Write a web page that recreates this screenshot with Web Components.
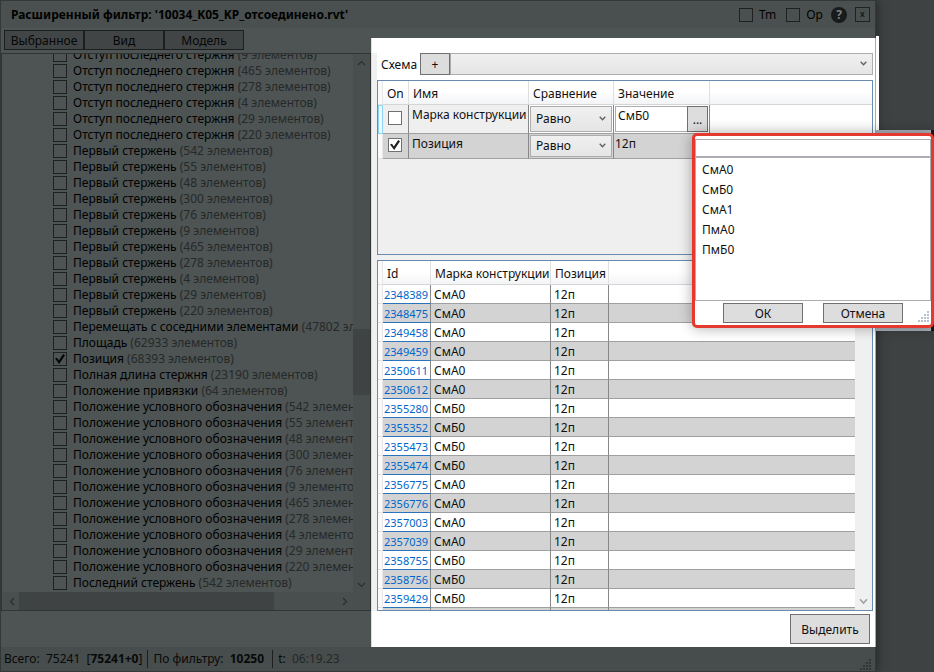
<!DOCTYPE html>
<html lang="ru">
<head>
<meta charset="utf-8">
<title>Расширенный фильтр</title>
<style>
html,body{margin:0;height:100%}
body{font:12px/16px "Noto Sans","Open Sans",sans-serif;color:#111;background:#3e4242;overflow:hidden}
</style>
</head>
<body>
<filter-app></filter-app>
<script>
const define=(name,css,html)=>{
  customElements.define(name,class extends HTMLElement{
    connectedCallback(){
      if(this.shadowRoot)return;
      const root=this.attachShadow({mode:'open'});
      root.innerHTML=`<style>*{box-sizing:border-box}button,input,select{font:inherit;color:inherit;margin:0}${css}</style>${typeof html==='function'?html(this):html}`;
    }
  });
};

define('ui-check',`
:host{display:block}
label{display:flex;align-items:center;gap:6px;white-space:pre}
input{appearance:none;flex:none;width:14px;height:14px;border:1px solid var(--box-line,#707070);background:var(--box,#fff);display:grid;place-items:center}
input:checked::before{content:"";width:10px;height:10px;background:var(--tick,#212121);clip-path:polygon(0 45%,20% 38%,38% 65%,82% 0,100% 12%,42% 100%)}
`,h=>`<label><input type="checkbox" ${h.hasAttribute('checked')?'checked':''} aria-label="${h.getAttribute('label')||h.textContent.trim()}"><span><slot></slot></span></label>`);

define('ui-button',`
:host{display:block}
button{display:block;width:100%;height:100%;padding:2px 0 0;border:1px solid var(--btn-line,#707070);background:var(--btn,#ddd);border-radius:0;line-height:16px}
`,'<button type="button"><slot></slot></button>');

define('ui-select',`
:host{display:block;position:relative}
select{display:block;appearance:none;width:100%;height:100%;padding:0 22px 0 5px;border:1px solid #acacac;border-radius:0;background:linear-gradient(#f0f0f0,#e5e5e5)}
svg{position:absolute;right:6px;top:calc(50% - 3px);pointer-events:none}
`,h=>`<select aria-label="${h.getAttribute('label')}"><option>${h.getAttribute('value')||''}</option></select><svg width="7" height="5" fill="none" stroke="#606060" stroke-width="1.3"><path d="M.7.7 3.5 3.7 6.3.7"/></svg>`);

define('tree-list',`
:host{display:grid;grid-template:minmax(0,1fr) 18px/minmax(0,1fr) 17px;border:1px solid #303434;background:#4d5453;--box:#4d5453;--box-line:#1f2121;--tick:#050606}
ul{list-style:none;margin:0;padding:0 0 0 51px;overflow:hidden;color:#000}
li{height:16px}
li:first-child{margin-top:-7px}
i{font-style:normal;color:#262929}
.v,.h{background:#484f4e;display:flex;align-items:center}
.v{flex-direction:column;padding:6px 0 4px}
.h{padding:0 5px 0 7px}
.v b{width:17px;height:66px;background:#3f4343;margin:263px 0 auto}
.h b{width:255px;height:18px;background:#3f4343;margin:0 auto 0 4px}
.c{background:#484f4e}
`,()=>{
  const A='Отступ последнего стержня',B='Первый стержень',C='Положение условного обозначения';
  const all=[542,55,48,300,76,9,465,278,4,29,220];
  const rows=[...[9,465,278,4,29,220].map(n=>[A,n]),...all.map(n=>[B,n]),['Перемещать с соседними элементами',47802],['Площадь',62933],['Позиция',68393,1],['Полная длина стержня',23190],['Положение привязки',64],...all.map(n=>[C,n]),['Последний стержень',542],['Последний стержень',55]];
  const arr=(w,h,d)=>`<svg width="${w}" height="${h}" fill="none" stroke="#2b2e2e" stroke-width="1.2"><path d="${d}"/></svg>`;
  return `<ul>${rows.map(r=>`<li><ui-check ${r[2]?'checked':''}>${r[0]} <i>(${r[1]} элементов)</i></ui-check></li>`).join('')}</ul>
  <div class="v">${arr(9,6,'M1 5 4.5 1.5 8 5')}<b></b>${arr(9,6,'M1 1 4.5 4.5 8 1')}</div>
  <div class="h">${arr(6,9,'M5 1 1.5 4.5 5 8')}<b></b>${arr(6,9,'M1 1 4.5 4.5 1 8')}</div><div class="c"></div>`;
});

const tableCss=`
table{border-collapse:separate;border-spacing:0;table-layout:fixed;width:100%}
th{font-weight:400;text-align:left;height:24px;padding:2px 0 0 4px;white-space:nowrap;background:linear-gradient(#fff 45%,#f3f4f6);border-right:1px solid #dfdfdf;border-bottom:1px solid #d5d5d5}
th:last-child{border-right:0}
td{border-right:1px solid #888;border-bottom:1px solid #a0a0a0;white-space:nowrap;overflow:hidden}
td:last-child{border-right:0}
th:first-child,td:first-child{border-right:1px solid #e8e8e8;border-bottom-color:#e4e4e4;background:#fafafa;padding:0}
`;

define('filter-rules',`
:host{display:block;border:1px solid #688caf;background:#efefef}
${tableCss}
td{background:#fff;padding:0;vertical-align:top}
tr.alt td:not(:first-child){background:#d3d3d3}
tr.cur td.name,tr.cur td.on{background:#efefef}
tr.cur td:first-child{background:#eef9ff;border:1px solid #8ed4f5}
.on{padding:6px 5px 5px}
.name{padding:2px 0 0 3px}
.r1 td{height:29px}.r2 td{height:25px}
.r2 .on{padding-top:4px}.r2 .val{padding:2px 1px 0}
ui-select{margin:1px}
.r1 ui-select{height:26px}.r2 ui-select{height:22px}
.edit{display:flex;margin:1px;height:26px}
.edit input{flex:1;min-width:0;border:1px solid #abadb3;border-right:0;padding:0 2px 6px;background:#fff}
.edit ui-button{width:21px}
`,`<table><colgroup><col style="width:5px"><col style="width:26px"><col style="width:120px"><col style="width:85px"><col style="width:96px"><col></colgroup>
<thead><tr><th></th><th>On</th><th>Имя</th><th>Сравнение</th><th>Значение</th><th></th></tr></thead>
<tbody><tr class="r1 cur"><td></td><td class="on"><ui-check label="Марка конструкции"></ui-check></td><td class="name">Марка конструкции</td><td><ui-select label="Сравнение" value="Равно"></ui-select></td><td><div class="edit"><input type="text" aria-label="Значение" value="СмБ0"><ui-button>...</ui-button></div></td><td></td></tr>
<tr class="r2 alt"><td></td><td class="on"><ui-check label="Позиция" checked></ui-check></td><td class="name">Позиция</td><td><ui-select label="Сравнение" value="Равно"></ui-select></td><td class="val">12п</td><td></td></tr></tbody></table>`);

define('result-grid',`
:host{display:grid;grid-template-columns:minmax(0,1fr) 17px;border:1px solid #688caf;background:#fff;overflow:hidden;min-height:0}
.clip{overflow:hidden;min-height:0}
${tableCss}
td{height:19px;line-height:17px;background:#fff;padding:1px 3px 0}
tr:nth-child(even) td:not(:first-child){background:#d3d3d3}
td.id{padding:1px 0 0 1px;border-bottom-color:#2a73bd;font-size:11px}
a{color:#0066cc;text-decoration:none}
.bar{background:#f0f0f0;display:flex;align-items:flex-end;justify-content:center;padding-bottom:5px}
`,()=>{
  const d='2348389 А,2348475 А,2349458 А,2349459 А,2350611 А,2350612 А,2355280 Б,2355352 Б,2355473 Б,2355474 Б,2356775 А,2356776 А,2357003 А,2357039 А,2358755 Б,2358756 Б,2359429 Б,2359430 Б'.split(',').map(s=>s.split(' '));
  return `<div class="clip"><table><colgroup><col style="width:5px"><col style="width:48px"><col style="width:120px"><col style="width:58px"><col></colgroup><thead><tr><th></th><th>Id</th><th>Марка конструкции</th><th>Позиция</th><th></th></tr></thead><tbody>${d.map(([i,m])=>`<tr><td></td><td class="id"><a href="#${i}">${i}</a></td><td>См${m}0</td><td>12п</td><td></td></tr>`).join('')}</tbody></table></div><div class="bar"><svg width="9" height="7" fill="none" stroke="#a0a0a0" stroke-width="1.6"><path d="M1 1.2 4.5 5 8 1.2"/></svg></div>`;
});

define('value-popup',`
:host{display:flex;flex-direction:column;background:#fff;border:3px solid #e5392f;border-radius:5px;box-shadow:0 0 14px #0005}
input{display:block;width:100%;height:19px;margin-top:3px;border:1px solid #abadb3;border-bottom-width:2px;padding:0 4px;background:#fff}
ul{list-style:none;margin:0;padding:2px 6px;flex:1;border:1px solid #abadb3;border-top:0}
li{height:20px;line-height:20px}
.foot{display:flex;gap:20px;padding:2px 28px 0;height:24px;position:relative}
ui-button{flex:1;height:20px}
svg{position:absolute;right:1px;bottom:2px}
`,()=>{
  let dots='';for(let r=0;r<4;r++)for(let c=3-r;c<4;c++)dots+=`<rect x="${c*3}" y="${r*3}" width="2" height="2"/>`;
  return `<input type="text" aria-label="Поиск значения"><ul>${['СмА0','СмБ0','СмА1','ПмА0','ПмБ0'].map(t=>`<li>${t}</li>`).join('')}</ul><div class="foot"><ui-button>ОК</ui-button><ui-button>Отмена</ui-button><svg width="12" height="12" fill="#b7bfd0">${dots}</svg></div>`;
});

define('title-bar',`
:host{display:flex;align-items:center;height:28px;padding:0 5px 0 10px;background:#4a504f;border-top:1px solid #343838;color:#000;--box:#4a504f;--box-line:#1f2121}
h1{font-size:12px;line-height:16px;font-weight:700;margin:0;flex:1;white-space:nowrap}
.tools{display:flex;align-items:center;gap:8px}
.tools ui-check+ui-check{margin-left:2px}
.help{display:block;width:16px;height:16px;padding:0;border:0;border-radius:8px;background:#191b1b;color:#7d8282;font-weight:700;line-height:16px}
.close{display:block;width:15px;height:15px;padding:0 0 2px;border:1px solid #202222;background:#4a504f;font-size:9px;line-height:11px}
`,`<h1>Расширенный фильтр: '10034_K05_KP_отсоединено.rvt'</h1><div class="tools"><ui-check>Tm</ui-check><ui-check>Op</ui-check><button class="help" type="button" aria-label="Справка">?</button><button class="close" type="button" aria-label="Закрыть">x</button></div>`);

define('status-bar',`
:host{display:flex;align-items:center;height:25px;padding:0 3px;background:#474d4c;border-bottom:1px solid #343838;color:#080909;white-space:pre}
span+span{border-left:1px solid #1d1f1f;padding-left:5px;margin-left:5px;line-height:18px}
i{font-style:normal;color:#242727}
svg{margin-left:auto;align-self:flex-end}
`,()=>{
  let dots='';for(let r=0;r<4;r++)for(let c=3-r;c<4;c++)dots+=`<rect x="${c*3}" y="${r*3}" width="2" height="2"/>`;
  return `<span>Всего:  75241  [<b>75241+0</b>]</span><span>По фильтру:  <b>10250</b> </span><span>t:  <i>06:19.23</i></span><svg width="12" height="12" fill="#303535">${dots}</svg>`;
});

define('filter-app',`
:host{display:grid;grid-template-columns:minmax(0,1fr) 58px;min-height:100vh;position:relative;background:#3e4242}
main{display:flex;flex-direction:column;height:100vh;background:#4d5453;border-left:1px solid #343838;border-right:1px solid #343838;box-shadow:0 0 10px #0008}
.work{flex:1;min-height:0;display:grid;grid-template-columns:370px minmax(0,1fr)}
.left{display:flex;flex-direction:column;min-height:0;padding-bottom:36px}
nav{display:flex;padding:2px 3px 3px;--btn:#414545;--btn-line:#1d1f1f;color:#060707}
nav ui-button{width:80px;height:20px}
tree-list{flex:1;min-height:0}
.right{display:flex;flex-direction:column;min-height:0;margin:10px -1px 0 0;padding:15px 2px 3px 5px;background:linear-gradient(#f0f0f0,#f0f0f0) 0 15px/5px calc(100% - 51px) no-repeat #fff;border-left:1px solid #ddd;border-right:1px solid #aaa}
.schema{display:flex;align-items:center;height:22px;margin-bottom:5px}
.schema label{width:43px;padding:2px 0 0 4px}
.schema ui-button{width:30px;height:22px}
.schema ui-select{flex:1;height:22px}
filter-rules{height:175px}
.gap{height:5px;background:#f0f0f0}
result-grid{flex:1}
.act{width:80px;height:30px;margin:3px 3px 0 auto}
.side{padding-top:36px}
.edge{width:3px;height:94px;background:#fff}
.strip{height:201px;background:#aab2bb;border-right:3px solid #161818}
value-popup{position:absolute;right:0;top:133px;width:242px;height:195px}
`,`<main><title-bar></title-bar><div class="work"><section class="left"><nav><ui-button>Выбранное</ui-button><ui-button>Вид</ui-button><ui-button>Модель</ui-button></nav><tree-list></tree-list></section>
<section class="right"><div class="schema"><label>Схема</label><ui-button>+</ui-button><ui-select label="Схема"></ui-select></div><filter-rules></filter-rules><div class="gap"></div><result-grid></result-grid><ui-button class="act">Выделить</ui-button></section></div><status-bar></status-bar></main><div class="side"><div class="edge"></div><div class="strip"></div></div><value-popup></value-popup>`);
</script>
</body>
</html>
